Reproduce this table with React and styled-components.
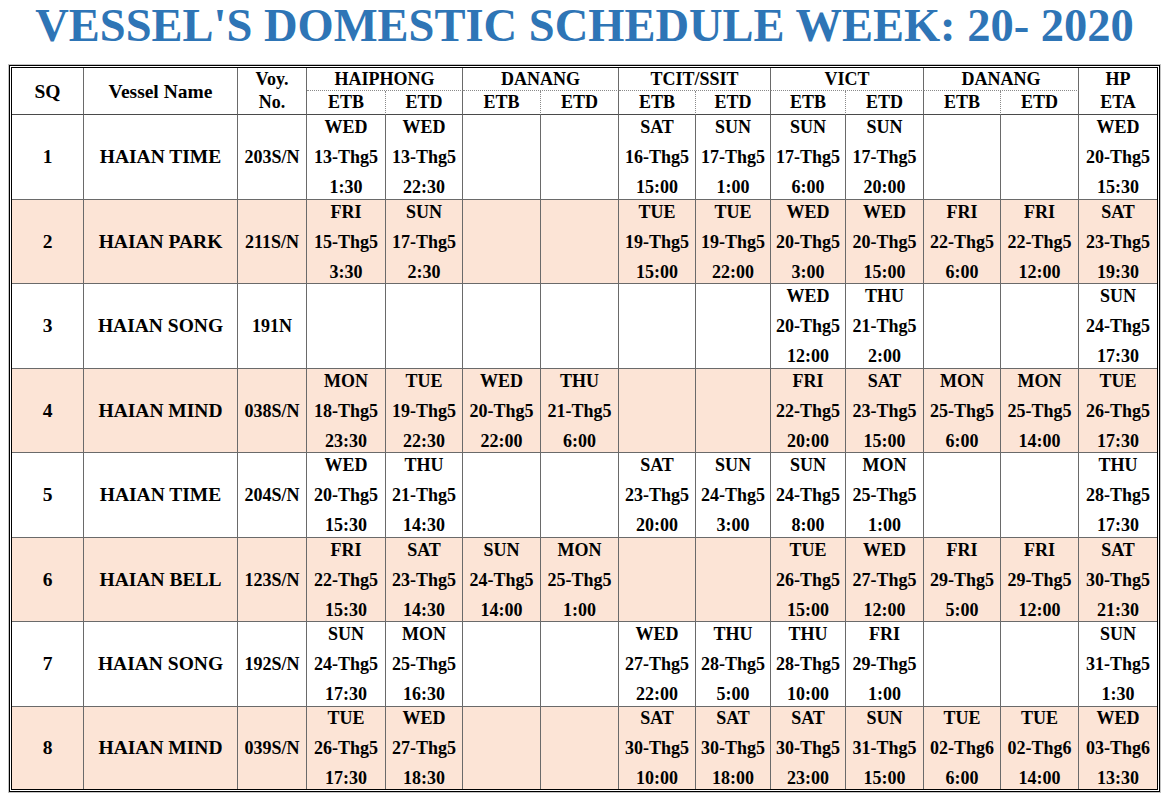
import React from "react";
import styled, { createGlobalStyle } from "styled-components";

const GlobalStyle = createGlobalStyle`
  html, body { margin: 0; padding: 0; background: #ffffff; }
  body { font-family: "Liberation Serif", "Times New Roman", serif; color: #000; }
  * { box-sizing: border-box; }
`;

const COLS = [72, 154, 69, 79, 77, 78, 78, 77, 75, 75, 78, 77, 78, 78];
const ROWS = [23, 24, 85, 84, 85, 84, 85, 84, 85, 82];
const LINE = "#6a6a6a";
const DOT = "1px dotted #8a8a8a";

const Page = styled.div`
  padding: 0 0 0 8px;
  width: 1172px;
`;

const Sheet = styled.div`
  width: 1153px;
  display: flex;
  flex-direction: column;
`;

const Title = styled.h1`
  margin: 0;
  height: 64px;
  text-align: center;
  color: #2e75b6;
  font-family: "Liberation Serif", "Times New Roman", serif;
  font-weight: 700;
  font-size: 46.5px;
  line-height: 51.6px;
  white-space: nowrap;
`;

const Frame = styled.div`
  border: 1px solid #c4c4c4;
`;

const DoubleBorder = styled.div`
  border: 3px double #000;
`;

const Grid = styled.div`
  display: grid;
  grid-template-columns: ${COLS.map((c) => `${c}px`).join(" ")};
  grid-template-rows: ${ROWS.map((r) => `${r}px`).join(" ")};
`;

const HeadCell = styled.div`
  grid-column: span ${(p) => p.$span || 1};
  grid-row: span ${(p) => p.$rows || 1};
  display: grid;
  grid-auto-rows: 23px;
  align-content: center;
  justify-items: center;
  font-weight: 700;
  font-size: ${(p) => p.$size || 18}px;
  line-height: 23px;
  white-space: nowrap;
  border-right: ${(p) => (p.$last ? "none" : p.$dotRight ? DOT : `1px solid ${LINE}`)};
  border-bottom: ${(p) => (p.$dotBottom ? DOT : "1px solid #4a4a4a")};
`;

const BodyCell = styled.div`
  display: grid;
  grid-auto-rows: 30px;
  align-content: center;
  justify-items: center;
  font-weight: 700;
  font-size: ${(p) => p.$size || 18}px;
  line-height: 30px;
  white-space: nowrap;
  background: ${(p) => (p.$shade ? "#fce4d6" : "#ffffff")};
  border-right: ${(p) => (p.$last ? "none" : `1px solid ${LINE}`)};
  border-bottom: ${(p) => (p.$bottom ? "none" : `1px solid ${LINE}`)};
`;

const Line = styled.span`
  display: block;
`;

const PORTS = ["HAIPHONG", "DANANG", "TCIT/SSIT", "VICT", "DANANG"];

const DATA = [
  ["1", "HAIAN TIME", "203S/N", ["WED 13-Thg5 1:30", "WED 13-Thg5 22:30", "", "", "SAT 16-Thg5 15:00", "SUN 17-Thg5 1:00", "SUN 17-Thg5 6:00", "SUN 17-Thg5 20:00", "", "", "WED 20-Thg5 15:30"]],
  ["2", "HAIAN PARK", "211S/N", ["FRI 15-Thg5 3:30", "SUN 17-Thg5 2:30", "", "", "TUE 19-Thg5 15:00", "TUE 19-Thg5 22:00", "WED 20-Thg5 3:00", "WED 20-Thg5 15:00", "FRI 22-Thg5 6:00", "FRI 22-Thg5 12:00", "SAT 23-Thg5 19:30"]],
  ["3", "HAIAN SONG", "191N", ["", "", "", "", "", "", "WED 20-Thg5 12:00", "THU 21-Thg5 2:00", "", "", "SUN 24-Thg5 17:30"]],
  ["4", "HAIAN MIND", "038S/N", ["MON 18-Thg5 23:30", "TUE 19-Thg5 22:30", "WED 20-Thg5 22:00", "THU 21-Thg5 6:00", "", "", "FRI 22-Thg5 20:00", "SAT 23-Thg5 15:00", "MON 25-Thg5 6:00", "MON 25-Thg5 14:00", "TUE 26-Thg5 17:30"]],
  ["5", "HAIAN TIME", "204S/N", ["WED 20-Thg5 15:30", "THU 21-Thg5 14:30", "", "", "SAT 23-Thg5 20:00", "SUN 24-Thg5 3:00", "SUN 24-Thg5 8:00", "MON 25-Thg5 1:00", "", "", "THU 28-Thg5 17:30"]],
  ["6", "HAIAN BELL", "123S/N", ["FRI 22-Thg5 15:30", "SAT 23-Thg5 14:30", "SUN 24-Thg5 14:00", "MON 25-Thg5 1:00", "", "", "TUE 26-Thg5 15:00", "WED 27-Thg5 12:00", "FRI 29-Thg5 5:00", "FRI 29-Thg5 12:00", "SAT 30-Thg5 21:30"]],
  ["7", "HAIAN SONG", "192S/N", ["SUN 24-Thg5 17:30", "MON 25-Thg5 16:30", "", "", "WED 27-Thg5 22:00", "THU 28-Thg5 5:00", "THU 28-Thg5 10:00", "FRI 29-Thg5 1:00", "", "", "SUN 31-Thg5 1:30"]],
  ["8", "HAIAN MIND", "039S/N", ["TUE 26-Thg5 17:30", "WED 27-Thg5 18:30", "", "", "SAT 30-Thg5 10:00", "SAT 30-Thg5 18:00", "SAT 30-Thg5 23:00", "SUN 31-Thg5 15:00", "TUE 02-Thg6 6:00", "TUE 02-Thg6 14:00", "WED 03-Thg6 13:30"]],
];

function Header() {
  return (
    <>
      <HeadCell $rows={2} $size={19.5}>SQ</HeadCell>
      <HeadCell $rows={2} $size={19.5}>Vessel Name</HeadCell>
      <HeadCell $rows={2}>
        <Line>Voy.</Line>
        <Line>No.</Line>
      </HeadCell>
      {PORTS.map((p, i) => (
        <HeadCell key={`p${i}`} $span={2} $dotBottom>
          {p}
        </HeadCell>
      ))}
      <HeadCell $rows={2} $last>
        <Line>HP</Line>
        <Line>ETA</Line>
      </HeadCell>
      {PORTS.map((p, i) => (
        <React.Fragment key={`e${i}`}>
          <HeadCell $dotRight>ETB</HeadCell>
          <HeadCell>ETD</HeadCell>
        </React.Fragment>
      ))}
    </>
  );
}

function Row({ row, index }) {
  const [sq, name, voy, stops] = row;
  const shade = index % 2 === 1;
  const bottom = index === DATA.length - 1;
  return (
    <>
      <BodyCell $shade={shade} $bottom={bottom} $size={19.5}>{sq}</BodyCell>
      <BodyCell $shade={shade} $bottom={bottom} $size={19.5}>{name}</BodyCell>
      <BodyCell $shade={shade} $bottom={bottom}>{voy}</BodyCell>
      {stops.map((s, i) => (
        <BodyCell
          key={i}
          $shade={shade}
          $bottom={bottom}
          $last={i === stops.length - 1}
        >
          {s
            ? s.split(" ").map((part, j) => <Line key={j}>{part}</Line>)
            : null}
        </BodyCell>
      ))}
    </>
  );
}

export default function App() {
  return (
    <Page>
      <GlobalStyle />
      <Sheet>
        <Title>VESSEL'S DOMESTIC SCHEDULE WEEK: 20- 2020</Title>
        <Frame>
          <DoubleBorder>
            <Grid>
              <Header />
              {DATA.map((row, i) => (
                <Row key={i} row={row} index={i} />
              ))}
            </Grid>
          </DoubleBorder>
        </Frame>
      </Sheet>
    </Page>
  );
}
